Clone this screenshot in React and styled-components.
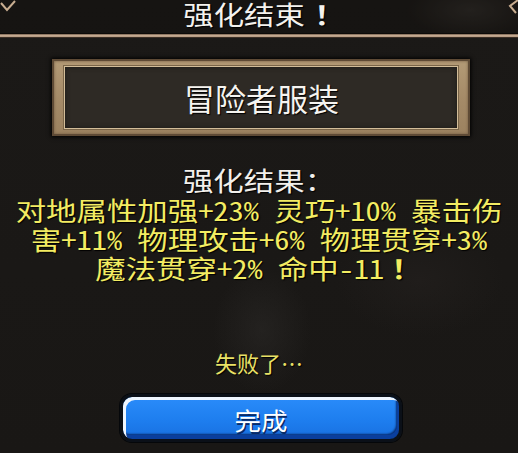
import React from "react";
import styled, { createGlobalStyle } from "styled-components";

const Global = createGlobalStyle`
  html, body {
    margin: 0;
    padding: 0;
    background: #1a1816;
  }
  #root {
    width: 518px;
    height: 453px;
    overflow: hidden;
  }
`;

const CJK = `"Noto Sans Mono CJK SC", "Noto Sans CJK SC", "DejaVu Sans", sans-serif`;

const Screen = styled.div`
  position: relative;
  width: 518px;
  height: 453px;
  overflow: hidden;
  display: flex;
  flex-direction: column;
  align-items: center;
  font-family: ${CJK};
  background:
    radial-gradient(ellipse 90px 40px at 470px 10px, rgba(70, 66, 62, 0.45), transparent 70%),
    radial-gradient(ellipse 70px 90px at 262px 330px, rgba(44, 42, 40, 0.55), transparent 70%),
    radial-gradient(ellipse 120px 80px at 420px 280px, rgba(38, 34, 32, 0.5), transparent 70%),
    linear-gradient(180deg, #1b1917 0%, #1a1816 60%, #191715 100%);
`;

const Header = styled.header`
  align-self: stretch;
  height: 33px;
  padding-left: 10px;
  display: flex;
  justify-content: center;
  align-items: flex-start;
  border-bottom: 1px solid #0c0a08;
  box-shadow: 0 1px 0 #8f7864, 0 2px 0 #c4a990, 0 3px 0 #b99e86, 0 4px 0 #3b2f26;
  background: rgba(14, 12, 10, 0.35);
`;

const Ornament = styled.svg`
  position: absolute;
  top: 0;
  ${p => (p.$side === "left" ? "left: 0;" : "right: 0;")}
`;

const Stretch = styled.span`
  display: inline-block;
  white-space: nowrap;
  transform: scaleX(${p => p.$sx || 1.17});
  transform-origin: center;
`;

/* full-width exclamation mark, centred in its own cell */
const Bang = styled.span`
  display: inline-block;
  margin-left: ${p => p.$gap || 8}px;
  font-weight: 700;
`;

const Title = styled.h1`
  margin: 0;
  font-family: ${CJK};
  font-weight: 400;
  font-size: 26px;
  line-height: 28px;
  color: #f4f2ee;
  text-shadow: 1px 1px 1px #000;
`;

const ItemFrame = styled.div`
  margin-top: 25px;
  margin-left: 3px;
  width: 392px;
  height: 61px;
  padding: 6px 11px;
  box-sizing: content-box;
  border: 2px solid #5e4a35;
  background: linear-gradient(180deg, #b39a76 0%, #a58b68 50%, #9c8260 100%);
  box-shadow: 0 0 4px 1px #000, inset 0 0 3px #6e5840;
  display: flex;
`;

const ItemPlate = styled.div`
  flex: 1;
  display: flex;
  align-items: center;
  justify-content: center;
  background: #2e2a25;
  box-shadow: 0 0 0 1px #d2bd99, 0 0 0 2px #7a6548, inset 0 0 5px #1c1916;
`;

const ItemName = styled.div`
  font-size: 31px;
  line-height: 34px;
  color: #f6f4f0;
  text-shadow: 1px 1px 1px #000;
  margin-left: 2px;
`;

const Result = styled.section`
  margin-top: 28px;
  display: flex;
  flex-direction: column;
  align-items: center;
`;

const ResultLabel = styled.div`
  font-size: 26px;
  line-height: 31px;
  color: #f2f0ec;
  text-shadow: 1px 1px 1px #000;
`;

const BonusLine = styled.div`
  font-size: 26px;
  line-height: 29px;
  color: #f3ec62;
  text-shadow: 1px 1px 1px #000;
`;

const Failed = styled.div`
  margin-top: 67px;
  font-size: 22px;
  line-height: 26px;
  color: #e9e166;
  text-shadow: 1px 1px 1px #000;
`;

const DoneButton = styled.button`
  margin-top: 19px;
  margin-left: 3px;
  width: 282px;
  height: 48px;
  border: 3px solid #0b1018;
  border-radius: 12px;
  padding: 3px 0 0;
  background: linear-gradient(180deg, #2a8cfa 0%, #1e7eef 55%, #1870e0 100%);
  box-shadow:
    inset 3px 3px 0 #eef6ff,
    inset -2px -4px 0 #0a3f9e,
    inset -3px -5px 2px #072c70,
    0 0 0 1px #05070a;
  display: flex;
  align-items: center;
  justify-content: center;
  font-family: ${CJK};
  font-size: 24px;
  line-height: 28px;
  color: #ffffff;
  text-shadow: 1px 2px 0 #0a2a66;
  cursor: pointer;
`;

export default function App() {
  return (
    <>
      <Global />
      <Screen lang="zh-CN">
        <Ornament $side="left" width="18" height="14" viewBox="0 0 18 14">
          <polyline points="1,3 7,10 15,1" fill="none" stroke="#c8ad90" strokeWidth="2" />
        </Ornament>
        <Ornament $side="right" width="16" height="16" viewBox="0 0 16 16">
          <polyline points="16,0 8,6 14,13" fill="none" stroke="#c8ad90" strokeWidth="2" />
        </Ornament>

        <Header>
          <Title>
            <Stretch>强化结束<Bang $gap={8}>！</Bang></Stretch>
          </Title>
        </Header>

        <ItemFrame>
          <ItemPlate>
            <ItemName>冒险者服装</ItemName>
          </ItemPlate>
        </ItemFrame>

        <Result>
          <ResultLabel>
            <Stretch>强化结果：</Stretch>
          </ResultLabel>
          <BonusLine>
            <Stretch>对地属性加强+23% 灵巧+10% 暴击伤</Stretch>
          </BonusLine>
          <BonusLine>
            <Stretch>害+11% 物理攻击+6% 物理贯穿+3%</Stretch>
          </BonusLine>
          <BonusLine>
            <Stretch>魔法贯穿+2% 命中-11<Bang $gap={6}>！</Bang></Stretch>
          </BonusLine>
        </Result>

        <Failed>失败了…</Failed>

        <DoneButton type="button">
          <Stretch $sx={1.1}>完成</Stretch>
        </DoneButton>
      </Screen>
    </>
  );
}
